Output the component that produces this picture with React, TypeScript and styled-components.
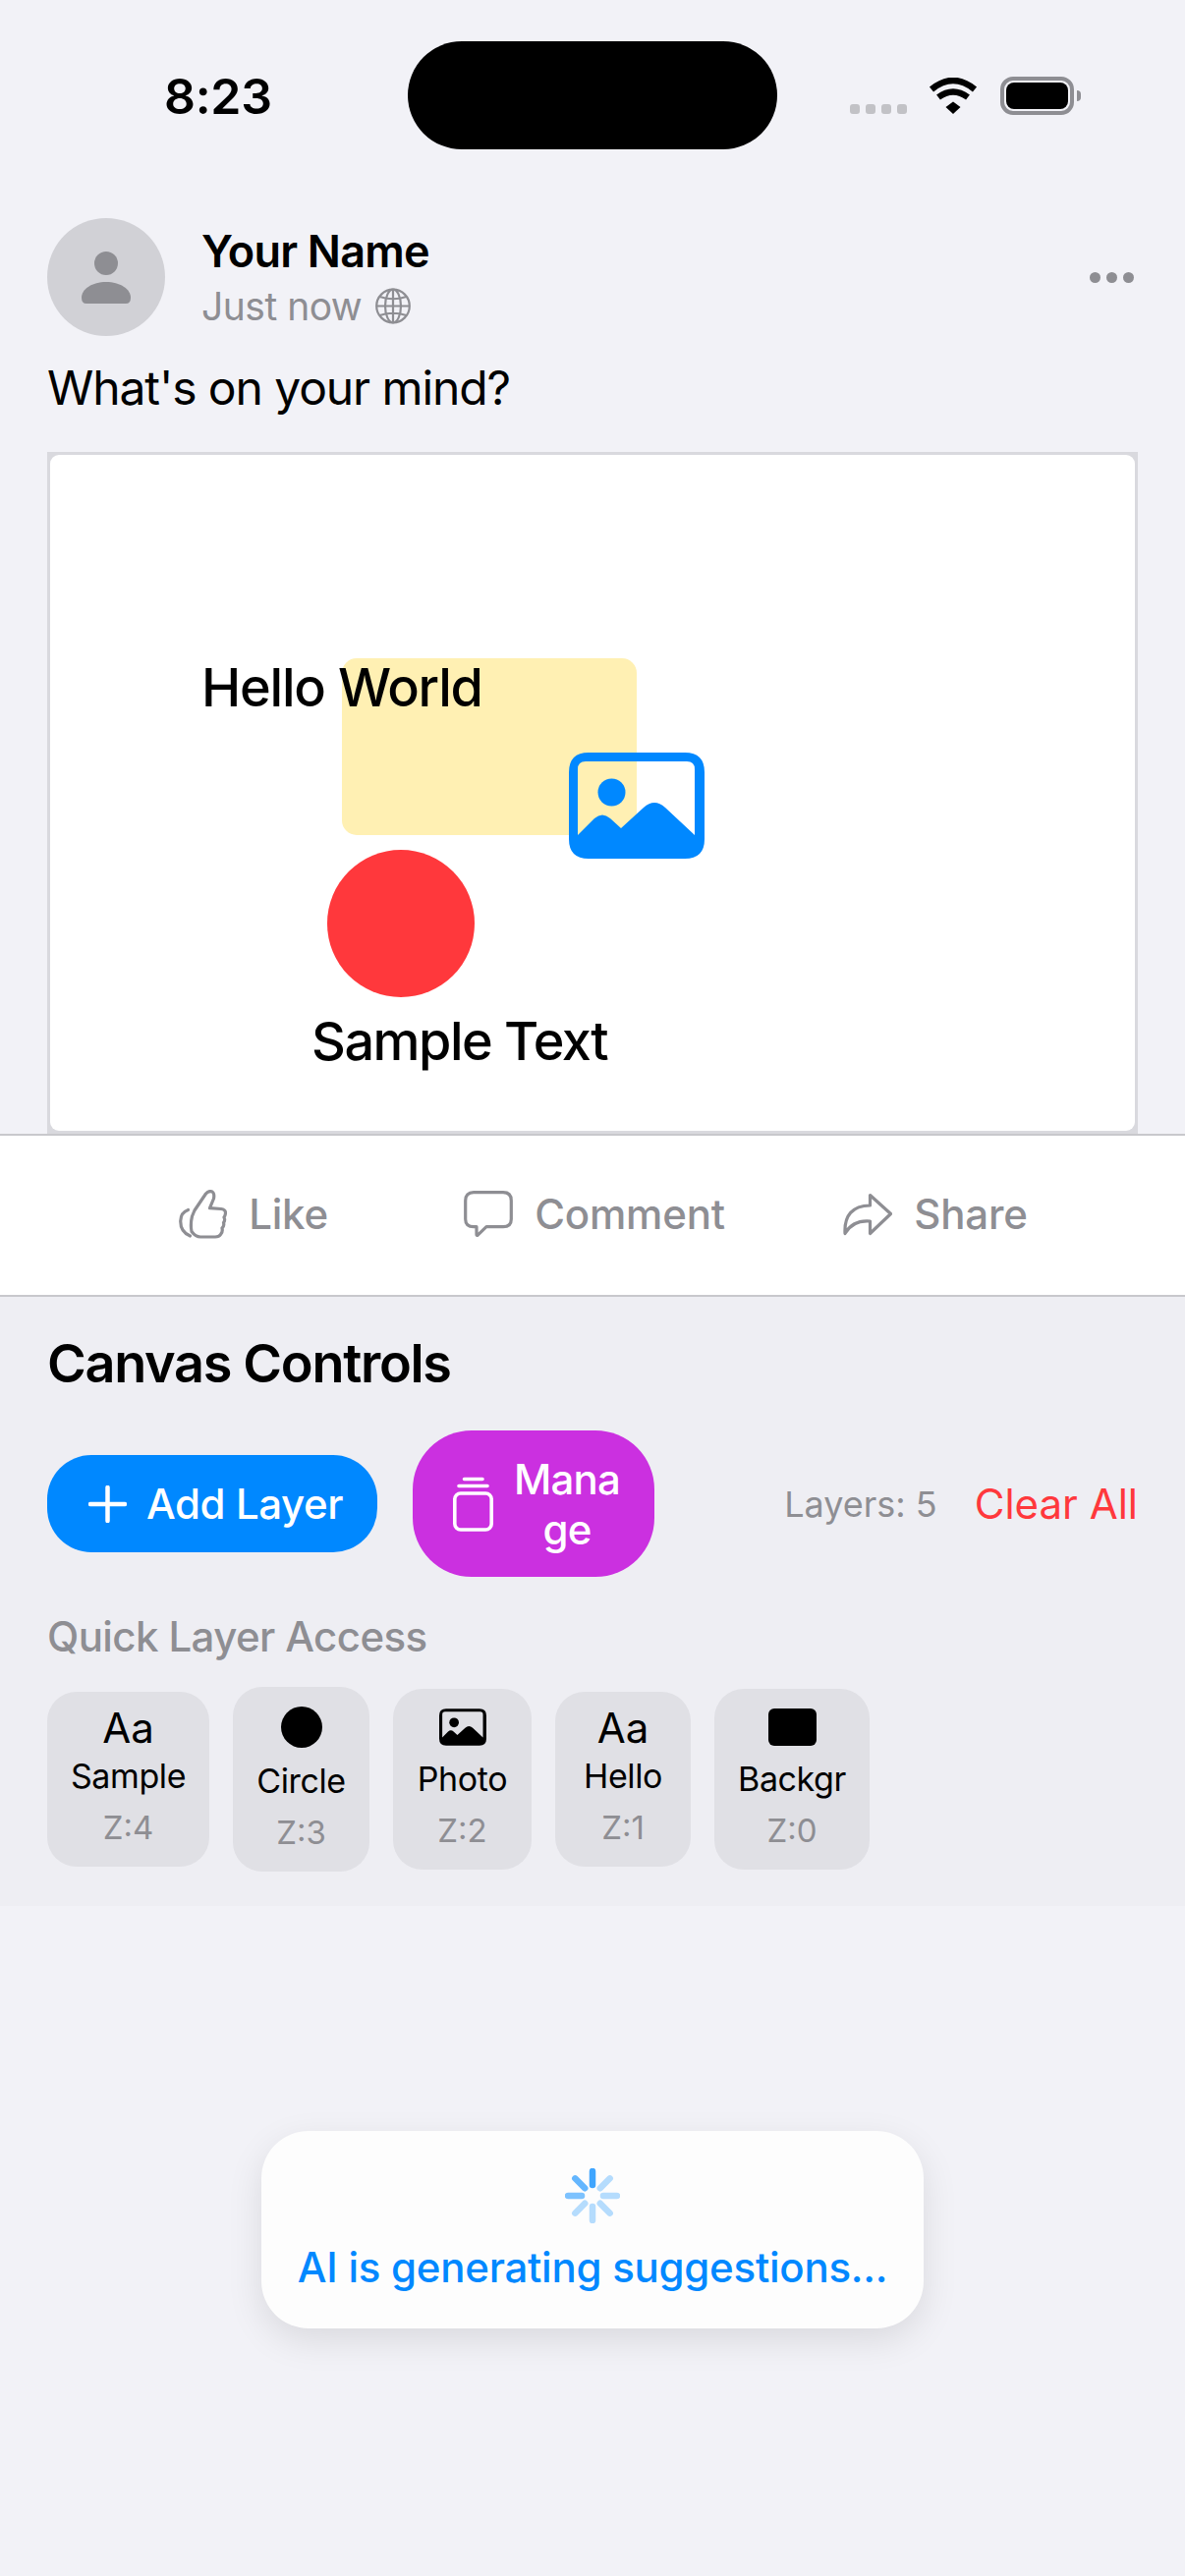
import React from 'react';
import styled, { createGlobalStyle } from 'styled-components';

const BLUE = '#0088ff';
const RED = '#ff383c';
const GRAY = '#8e8e93';

const GlobalStyle = createGlobalStyle`
  html, body { margin: 0; padding: 0; background: #f2f2f7; }
  body { font-family: Inter, "Liberation Sans", sans-serif; color: #000; }
  * { box-sizing: border-box; }
`;

const Screen = styled.div`
  width: 1206px;
  height: 2622px;
  background: #f2f2f7;
  overflow: hidden;
  display: flex;
  flex-direction: column;
`;

/* status bar */
const StatusBar = styled.div`
  display: grid;
  grid-template-columns: 415px 376px 1fr;
  padding-top: 42px;
  height: 152px;
`;
const Time = styled.div`
  padding-left: 167px;
  height: 110px;
  line-height: 112px;
  font-size: 50px;
  font-weight: 600;
  letter-spacing: -0.3px;
`;
const Island = styled.div`
  height: 110px;
  border-radius: 55px;
  background: #000;
`;
const StatusRight = styled.div`
  padding: 36px 0 0 74px;
  height: 110px;
  display: flex;
  align-items: flex-end;
  position: relative;
`;
const SignalDots = styled.div`
  display: flex;
  gap: 6px;
  margin: 0 70px 36px 0;
`;
const SignalDot = styled.span`
  width: 10px;
  height: 10px;
  border-radius: 3px;
  background: #c2c2c6;
`;
const WifiIcon = styled.svg`
  position: absolute;
  left: 154px;
  top: 37px;
`;
const Battery = styled.div`
  position: absolute;
  left: 227px;
  top: 36px;
  width: 75px;
  height: 39px;
  border: 4px solid ${GRAY};
  border-radius: 13px;
  padding: 2px;
  &::after {
    content: '';
    position: absolute;
    right: -11px;
    top: 10px;
    width: 4px;
    height: 11px;
    border-radius: 0 4px 4px 0;
    background: ${GRAY};
  }
`;
const BatteryFill = styled.div`
  width: 100%;
  height: 100%;
  border-radius: 8px;
  background: #000;
`;

/* post */
const Post = styled.div`
  padding: 70px 48px 0;
`;
const PostHeader = styled.div`
  display: flex;
  align-items: center;
  height: 120px;
`;
const Avatar = styled.div`
  width: 120px;
  height: 120px;
  border-radius: 50%;
  background: #d1d1d6;
  display: flex;
  align-items: center;
  justify-content: center;
`;
const NameBlock = styled.div`
  margin-left: 37px;
  flex: 1;
`;
const Name = styled.div`
  font-size: 45px;
  line-height: 54px;
  font-weight: 600;
  letter-spacing: -0.8px;
`;
const Meta = styled.div`
  display: flex;
  align-items: center;
  gap: 14px;
  margin-top: 5px;
  font-size: 39px;
  line-height: 48px;
  letter-spacing: -0.5px;
  color: ${GRAY};
`;
const MoreDots = styled.div`
  display: flex;
  gap: 6px;
  margin-right: 4px;
`;
const MoreDot = styled.span`
  width: 11px;
  height: 11px;
  border-radius: 50%;
  background: ${GRAY};
`;
const Caption = styled.div`
  margin-top: 25px;
  font-size: 48px;
  line-height: 56px;
  letter-spacing: -1.1px;
`;
const CanvasFrame = styled.div`
  margin-top: 37px;
  height: 694px;
  padding: 3px;
  background: #d9d9de;
`;
const CanvasArea = styled.div`
  position: relative;
  height: 100%;
  background: #fff;
  border-radius: 9px;
  overflow: hidden;
`;
const CanvasRect = styled.div`
  position: absolute;
  left: 297px;
  top: 207px;
  width: 300px;
  height: 180px;
  border-radius: 15px;
  background: #fff0b3;
`;
const CanvasCircle = styled.div`
  position: absolute;
  left: 282px;
  top: 402px;
  width: 150px;
  height: 150px;
  border-radius: 50%;
  background: ${RED};
`;
const CanvasText = styled.div<{ $x: number; $y: number; $tracking: number }>`
  position: absolute;
  left: ${p => p.$x}px;
  top: ${p => p.$y}px;
  font-size: 54px;
  font-weight: 450;
  line-height: 64px;
  white-space: nowrap;
  letter-spacing: ${p => p.$tracking}px;
`;
const CanvasPhoto = styled.div`
  position: absolute;
  left: 528px;
  top: 303px;
  color: ${BLUE};
  line-height: 0;
`;

/* like / comment / share */
const ActionBar = styled.div`
  height: 166px;
  background: #fff;
  border-top: 2px solid #c8c8cc;
  border-bottom: 2px solid #c8c8cc;
  display: grid;
  grid-template-columns: repeat(3, 347px);
  justify-content: center;
  padding: 0 0 3px 4px;
`;
const ActionButton = styled.div`
  display: flex;
  align-items: center;
  justify-content: center;
  gap: 22px;
  color: ${GRAY};
  font-size: 42px;
  font-weight: 450;
  letter-spacing: -0.2px;
`;

/* controls */
const Controls = styled.div`
  height: 620px;
  background: #eeeef3;
  padding: 38px 48px 0;
`;
const ControlsTitle = styled.div`
  font-size: 54px;
  line-height: 60px;
  font-weight: 600;
  letter-spacing: -1.3px;
`;
const ControlsRow = styled.div`
  margin-top: 38px;
  display: flex;
  align-items: center;
  height: 149px;
`;
const PrimaryButton = styled.div`
  width: 336px;
  height: 99px;
  border-radius: 45px;
  background: ${BLUE};
  color: #fff;
  display: flex;
  align-items: center;
  padding-left: 42px;
  gap: 20px;
  font-size: 42px;
  font-weight: 450;
  letter-spacing: -0.4px;
`;
const ManageButton = styled.div`
  margin-left: 36px;
  width: 246px;
  height: 149px;
  border-radius: 60px;
  background: #cb30e0;
  color: #fff;
  display: flex;
  align-items: center;
  padding-left: 41px;
  gap: 21px;
  font-size: 42px;
  line-height: 51px;
  font-weight: 450;
  letter-spacing: -0.8px;
  text-align: center;
`;
const LayerCount = styled.div`
  margin-left: auto;
  font-size: 36px;
  color: ${GRAY};
`;
const ClearAll = styled.div`
  margin-left: 38px;
  font-size: 42px;
  color: ${RED};
`;
const QuickTitle = styled.div`
  margin-top: 36px;
  font-size: 42px;
  line-height: 50px;
  font-weight: 450;
  letter-spacing: -0.6px;
  color: ${GRAY};
`;
const ChipRow = styled.div`
  margin-top: 26px;
  display: flex;
  align-items: center;
  gap: 24px;
  height: 188px;
`;
const Chip = styled.div<{ $w: number }>`
  width: ${p => p.$w}px;
  padding: 11px 0 20px;
  background: #e0e0e5;
  border-radius: 30px;
  display: flex;
  flex-direction: column;
  align-items: center;
`;
const ChipIcon = styled.div<{ $h: number }>`
  height: ${p => p.$h}px;
  display: flex;
  align-items: center;
  justify-content: center;
  font-size: 42px;
`;
const ChipLabel = styled.div`
  margin-top: 3px;
  height: 44px;
  line-height: 44px;
  font-size: 34px;
  letter-spacing: -0.4px;
  white-space: nowrap;
`;
const ChipZ = styled.div`
  margin-top: 10px;
  height: 40px;
  line-height: 40px;
  font-size: 33px;
  color: ${GRAY};
`;
const ChipCircle = styled.div`
  width: 42px;
  height: 42px;
  border-radius: 50%;
  background: #000;
`;
const ChipRect = styled.div`
  width: 49px;
  height: 38px;
  border-radius: 6px;
  background: #000;
`;

/* AI toast */
const ToastArea = styled.div`
  display: flex;
  justify-content: center;
  padding-top: 229px;
`;
const Toast = styled.div`
  width: 674px;
  height: 201px;
  border-radius: 48px;
  background: #fdfdfd;
  box-shadow: 0 12px 36px rgba(0, 0, 0, 0.1);
  display: flex;
  flex-direction: column;
  align-items: center;
  padding-top: 38px;
`;
const ToastText = styled.div`
  margin-top: 20px;
  font-size: 42px;
  font-weight: 450;
  line-height: 50px;
  letter-spacing: -0.25px;
  color: ${BLUE};
  white-space: nowrap;
`;

const PhotoGlyph = ({ width, height }: { width: number; height: number }) => (
  <svg width={width} height={height} viewBox="0 0 138 108" fill="currentColor">
    <path
      fillRule="evenodd"
      d="M20 0H118Q138 0 138 20V88Q138 108 118 108H20Q0 108 0 88V20Q0 0 20 0ZM9 84V17Q9 9 17 9H120Q128 9 128 17V84L98 56Q87 46 76 56L53 77L42 67Q34 60 26 67Z"
    />
    <circle cx="43.5" cy="40.5" r="14" />
  </svg>
);

const Person = () => (
  <svg width="50" height="53" viewBox="0 0 50 53" fill={GRAY}>
    <circle cx="25" cy="12" r="12" />
    <path d="M0 47C0 38 11 31 25 31C39 31 50 38 50 47Q50 53 45 53H5Q0 53 0 47Z" />
  </svg>
);

const Globe = () => (
  <svg width="36" height="37" viewBox="0 0 36 36" fill="none" stroke={GRAY} strokeWidth="2.2">
    <circle cx="18" cy="18" r="16.8" />
    <ellipse cx="18" cy="18" rx="8" ry="16.8" />
    <path d="M18 1V35M1.2 18H34.8M4.5 8.5Q18 13 31.5 8.5M4.5 27.5Q18 23 31.5 27.5" />
  </svg>
);

const ThumbIcon = () => (
  <svg width="49" height="50" viewBox="0 0 49 50" fill="none" stroke={GRAY} strokeWidth="3.2" strokeLinejoin="round" strokeLinecap="round">
    <path d="M16 21L27.5 4Q30.5 0.5 34 2Q36.5 3.5 35.5 9L31.5 18.7L43 19.5Q47.7 20 47.5 24Q47 27 46 28Q47.5 31 45.5 33.5Q46.5 37 44 39Q45 43 42.5 45.5Q41 48 37 48H22Q17 48 13 42.5Q11.5 35 13.5 27Z" />
    <path d="M9.5 20.5Q2 23 1.7 32Q1.7 43 11.5 47" />
  </svg>
);

const CommentIcon = () => (
  <svg width="50" height="47" viewBox="0 0 50 47" fill="none" stroke={GRAY} strokeWidth="3.2" strokeLinejoin="round">
    <path d="M10 1.7H40Q48.3 1.7 48.3 10V29Q48.3 36.7 40 36.7H23L14 45.3Q13 45.8 13 44.5V36.7H10Q1.7 36.7 1.7 29V10Q1.7 1.7 10 1.7Z" />
  </svg>
);

const ShareIcon = () => (
  <svg width="50" height="44" viewBox="0 0 50 44" fill="none" stroke={GRAY} strokeWidth="3.2" strokeLinejoin="round">
    <path d="M27.5 2.5L48.5 21.5L27.5 41.5V29Q10 27.5 2 41.5Q0.5 13.5 27.5 13Z" />
  </svg>
);

const PlusIcon = () => (
  <svg width="39" height="38" viewBox="0 0 39 38" stroke="#fff" strokeWidth="4.5" strokeLinecap="round">
    <path d="M19.5 2V36M2 19H37" />
  </svg>
);

const StackIcon = () => (
  <svg width="41" height="57" viewBox="0 0 41 57" fill="none" stroke="#fff" strokeWidth="3.6" strokeLinecap="round">
    <rect x="1.8" y="18" width="37.4" height="37" rx="6" />
    <path d="M6 10.5H35M11.5 3.5H30" />
  </svg>
);

const Spinner = () => {
  const spokes = [0.75, 0.28, 0.28, 0.28, 0.28, 0.28, 0.5, 0.6];
  return (
    <svg width="56" height="56" viewBox="0 0 56 56">
      {spokes.map((opacity, i) => (
        <line
          key={i}
          x1="28"
          y1="3"
          x2="28"
          y2="17"
          stroke={BLUE}
          strokeWidth="6.5"
          strokeLinecap="round"
          opacity={opacity}
          transform={`rotate(${i * 45} 28 28)`}
        />
      ))}
    </svg>
  );
};

const chips = [
  { w: 165, h: 50, icon: 'Aa', label: 'Sample', z: 4 },
  { w: 139, h: 60, icon: 'circle', label: 'Circle', z: 3 },
  { w: 141, h: 56, icon: 'photo', label: 'Photo', z: 2 },
  { w: 138, h: 50, icon: 'Aa', label: 'Hello', z: 1 },
  { w: 158, h: 56, icon: 'rect', label: 'Backgr', z: 0 },
];

const renderChipIcon = (icon: string) => {
  if (icon === 'circle') return <ChipCircle />;
  if (icon === 'rect') return <ChipRect />;
  if (icon === 'photo') return <PhotoGlyph width={48} height={38} />;
  return icon;
};

const App = () => {
  return (
    <Screen>
      <GlobalStyle />
      <StatusBar>
        <Time>8:23</Time>
        <Island />
        <StatusRight>
          <SignalDots>
            <SignalDot />
            <SignalDot />
            <SignalDot />
            <SignalDot />
          </SignalDots>
          <WifiIcon width="50" height="37" viewBox="0 0 50 37" fill="none" stroke="#000" strokeWidth="6.5">
            <path d="M3 12Q25 -6 47 12" />
            <path d="M10 20Q25 9 40 20" />
            <path d="M17.5 30L25 24.5L32.5 30L25 37Z" fill="#000" stroke="none" />
          </WifiIcon>
          <Battery>
            <BatteryFill />
          </Battery>
        </StatusRight>
      </StatusBar>

      <Post>
        <PostHeader>
          <Avatar>
            <Person />
          </Avatar>
          <NameBlock>
            <Name>Your Name</Name>
            <Meta>
              Just now <Globe />
            </Meta>
          </NameBlock>
          <MoreDots>
            <MoreDot />
            <MoreDot />
            <MoreDot />
          </MoreDots>
        </PostHeader>
        <Caption>What's on your mind?</Caption>
        <CanvasFrame>
          <CanvasArea>
            <CanvasRect />
            <CanvasText $x={154} $y={205} $tracking={-1.2}>Hello World</CanvasText>
            <CanvasPhoto>
              <PhotoGlyph width={138} height={108} />
            </CanvasPhoto>
            <CanvasCircle />
            <CanvasText $x={266} $y={565} $tracking={-1.5}>Sample Text</CanvasText>
          </CanvasArea>
        </CanvasFrame>
      </Post>

      <ActionBar>
        <ActionButton>
          <ThumbIcon />
          Like
        </ActionButton>
        <ActionButton>
          <CommentIcon />
          Comment
        </ActionButton>
        <ActionButton>
          <ShareIcon />
          Share
        </ActionButton>
      </ActionBar>

      <Controls>
        <ControlsTitle>Canvas Controls</ControlsTitle>
        <ControlsRow>
          <PrimaryButton>
            <PlusIcon />
            Add Layer
          </PrimaryButton>
          <ManageButton>
            <StackIcon />
            <div>
              Mana
              <br />
              ge
            </div>
          </ManageButton>
          <LayerCount>Layers: 5</LayerCount>
          <ClearAll>Clear All</ClearAll>
        </ControlsRow>
        <QuickTitle>Quick Layer Access</QuickTitle>
        <ChipRow>
          {chips.map(c => (
            <Chip key={c.label} $w={c.w}>
              <ChipIcon $h={c.h}>{renderChipIcon(c.icon)}</ChipIcon>
              <ChipLabel>{c.label}</ChipLabel>
              <ChipZ>Z:{c.z}</ChipZ>
            </Chip>
          ))}
        </ChipRow>
      </Controls>

      <ToastArea>
        <Toast>
          <Spinner />
          <ToastText>AI is generating suggestions...</ToastText>
        </Toast>
      </ToastArea>
    </Screen>
  );
};

export default App;
